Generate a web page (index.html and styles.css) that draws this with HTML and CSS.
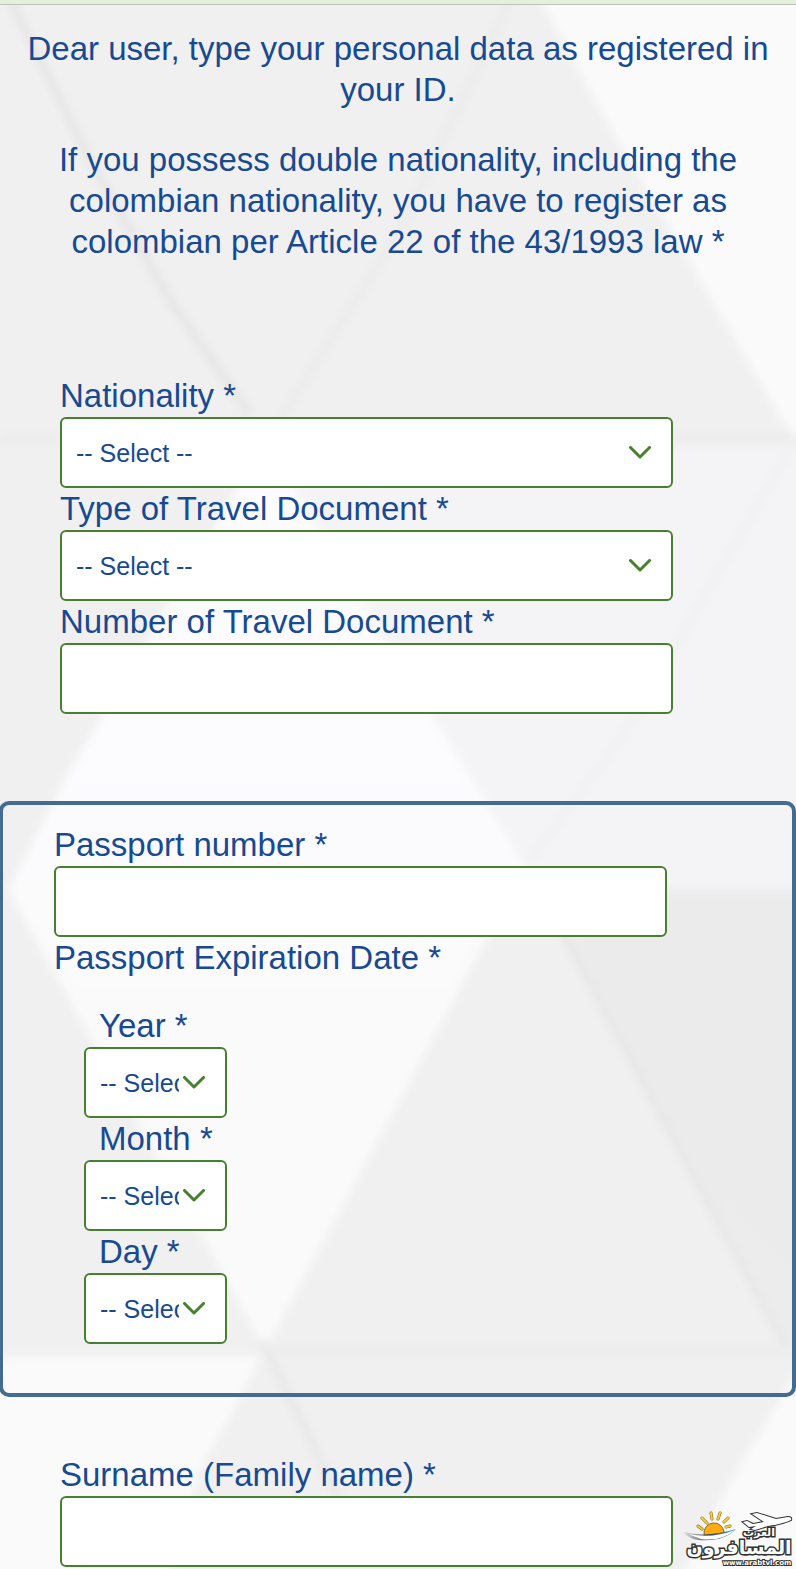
FILE: index.html
```html
<!DOCTYPE html>
<html lang="en">
	<head>
		<meta charset="utf-8" />
		<meta name="viewport" content="width=device-width, initial-scale=1" />
		<title>Personal data</title>
		<link rel="stylesheet" href="styles.css">
	</head>
	<body>
		<!-- faceted background -->
		<svg class="backdrop" viewBox="0 0 796 1569" preserveAspectRatio="none" aria-hidden="true">
			<defs>
				<filter id="soft"><feGaussianBlur stdDeviation="4"/></filter>
				<linearGradient id="facet" x1="0" y1="0" x2="0" y2="1">
					<stop offset="0.35" stop-color="#fcfcff"/>
					<stop offset="0.65" stop-color="#fafafa"/>
				</linearGradient>
				<linearGradient id="shade" x1="0.2" y1="1" x2="0.8" y2="0">
					<stop offset="0" stop-color="#f0f0f0"/>
					<stop offset="0.5" stop-color="#ebebec"/>
				</linearGradient>
			</defs>
			<rect width="796" height="1569" fill="#f0f0f0"/>
			<g filter="url(#soft)">
				<path d="M530 -20H820V460L785 425L700 280L600 110Z" fill="#fafafa"/>
				<path d="M250 446H820V890H530Z" fill="#f4f4f7"/>
				<path d="M265 440L525 868L265 1350L8 890L70 770Z" fill="url(#facet)"/>
				<path d="M535 890H820V1380L785 1345Z" fill="url(#shade)"/>
				<path d="M-20 1357H262L200 1470L160 1600H-20Z" fill="#fafafa"/>
				<path d="M820 1340L785 1390L720 1500L670 1600H820Z" fill="#fafafa"/>
				<g fill="none" stroke="#e4e4e4" stroke-width="7">
					<path d="M10 0L90 160L170 300L250 415"/>
					<path d="M510 0L400 230L280 420" stroke="#ebebeb"/>
					<path d="M262 1340L340 1500" stroke="#e7e7e7"/>
					<path d="M550 910L785 1345" stroke="#e7e7e8"/>
					<path d="M265 1350H790M0 438H60M672 438H796" stroke="#ebebeb"/>
					<path d="M790 450L620 740L530 860" stroke="#f0f0f1"/>
				</g>
			</g>
		</svg>
		<div class="topbar"></div>
		<main class="page">
			<div class="intro">
				<p>Dear user, type your personal data as registered in your ID.</p>
				<p>If you possess double nationality, including the colombian nationality, you have to register as colombian per Article 22 of the 43/1993 law *</p>
			</div>
			<form>
				<div class="group">
					<label for="nationality">Nationality *</label>
					<select id="nationality"><option>-- Select --</option></select>
					<label for="docType">Type of Travel Document *</label>
					<select id="docType"><option>-- Select --</option></select>
					<label for="docNumber">Number of Travel Document *</label>
					<input type="text" id="docNumber">
				</div>
				<div class="passport">
					<label for="passNumber">Passport number *</label>
					<input type="text" id="passNumber">
					<div id="expiration">Passport Expiration Date *</div>
					<div class="date" role="group" aria-labelledby="expiration">
						<label for="year">Year *</label>
						<select id="year"><option>-- Select --</option></select>
						<label for="month">Month *</label>
						<select id="month"><option>-- Select --</option></select>
						<label for="day">Day *</label>
						<select id="day"><option>-- Select --</option></select>
					</div>
				</div>
				<div class="group names">
					<label for="surname">Surname (Family name) *</label>
					<input type="text" id="surname">
				</div>
			</form>
		</main>
		<svg class="watermark" viewBox="0 0 114 58">
			<defs>
				<linearGradient id="swoosh" x1="0" x2="1">
					<stop offset="0" stop-color="#555" stop-opacity="0.1"/>
					<stop offset="0.5" stop-color="#345"/>
					<stop offset="1" stop-color="#4aa3d4"/>
				</linearGradient>
			</defs>
			<!-- sun -->
			<g stroke="#7a6520" stroke-width="3" stroke-linecap="round">
				<path d="M16 17l4 3M20 9l5 5M29 4l1 6M38 4l-2 6M46 9l-4 4M48 17l-4 1"/>
			</g>
			<g stroke="#fc3" stroke-width="2" stroke-linecap="round">
				<path d="M16 17l4 3M20 9l5 5M29 4l1 6M38 4l-2 6M46 9l-4 4M48 17l-4 1"/>
			</g>
			<path d="M22 25a10 10 0 0 1 20-2l-6 5h-13z" fill="#fa1" stroke="#8a6a20"/>
			<path d="M1 23q24 6 53-3q-12 13-38 11q-8-1-15-8z" fill="url(#swoosh)"/>
			<path d="M6 25q24 5 47-4q-14 12-34 9z" fill="#fff"/>
			<!-- plane -->
			<path d="M61 13l4-1l6 3l11-2l-12-8l5-1l19 6l12-2q4 0 3 3q-9 4-23 6l-13 4l-4-1l5-3l-7 1z" fill="#fff" stroke="#333" stroke-width="2" paint-order="stroke"/>
			<text class="wm-main" x="57" y="45">المسافرون</text>
			<text class="wm-small" x="77" y="27">العرب</text>
			<text class="wm-url" x="75" y="56">www.arabtvl.com</text>
		</svg>
	</body>
</html>
```
FILE: styles.css
```css
*{box-sizing: border-box;}
body{position: relative; margin: 0; overflow-x: hidden; background-color: #f0f0f0; color: #174a91; font: 33px/41px "Liberation Sans", Arial, sans-serif;}
.backdrop{position: absolute; left: 0; top: 0; z-index: -1; width: 100%; height: 100%;}
.topbar{height: 5px; background-color: #e4f0dd; border-bottom: 1px solid #bcc4b8;}
.page{padding-top: 23px;}
.intro{padding: 0 20px; text-align: center;}
.intro p{margin: 0 0 29px;}
.group{padding: 84px 60px 87px;}
label{display: block; line-height: 42px;}
input, select{display: block; width: 100%; max-width: 613px; height: 71px; margin: 0; padding: 0 46px 0 15px; border: 2px solid #47802f; border-radius: 6px; background-color: #fff; color: #174a91; font: 25px "Liberation Sans", Arial, sans-serif;}
select{appearance: none; padding-left: 14px; background-image: url("data:image/svg+xml,%3Csvg xmlns='http://www.w3.org/2000/svg' width='22' height='13'%3E%3Cpath d='M1.5 1.5L11 11L20.5 1.5' fill='none' stroke='%2347802f' stroke-width='3' stroke-linecap='round' stroke-linejoin='round'/%3E%3C/svg%3E"); background-repeat: no-repeat; background-position: right 20px center;}
.passport{margin-left: -1px; padding: 19px 51px 49px; border: 4px solid #456c90; border-radius: 10px;}
.date{padding: 27px 0 0 30px;}
.date label{padding-left: 15px;}
.date select{width: 143px;}
.names{padding-top: 57px; padding-bottom: 2px;}
.watermark{position: absolute; right: 0; bottom: 2px; width: 114px; height: 58px;}
.watermark text{fill: #fff; stroke: #333; paint-order: stroke; text-anchor: middle; font-family: "DejaVu Sans", sans-serif; font-weight: bold;}
.wm-main{font-size: 19px; stroke-width: 3px;}
.wm-small{font-size: 11px; stroke-width: 3px;}
.wm-url{font-size: 7px; stroke-width: 2px;}
```
